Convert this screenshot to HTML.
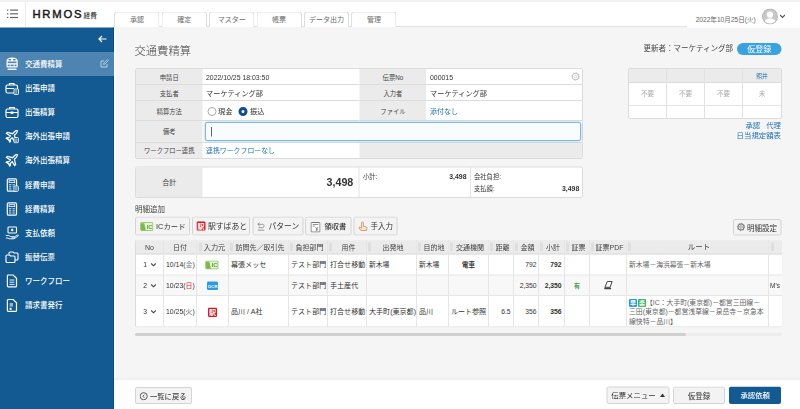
<!DOCTYPE html>
<html lang="ja">
<head>
<meta charset="utf-8">
<title>HRMOS 経費 - 交通費精算</title>
<style>
*{box-sizing:border-box;margin:0;padding:0}
html,body{width:800px;height:409px;overflow:hidden;background:#f5f5f5}
#root{position:absolute;left:0;top:0;width:1600px;height:818px;transform:scale(0.5);transform-origin:0 0}
body{position:relative;font-family:"Liberation Sans","Noto Sans CJK JP",sans-serif;font-size:15px;color:#333;line-height:1}
.a{position:absolute;white-space:nowrap}
/* header */
#hd{left:0;top:0;width:1600px;height:56px;background:#fff}
#hdl{left:228px;top:52px;width:1146px;height:4px;background:#f5f5f5;border-top:2px solid #e2e2e2}
#hdtop{left:0;top:0;width:1600px;height:4px;background:#f1f1f1}
.tab{top:23px;height:31px;width:90.8px;background:#fff;border:2px solid #dfdfdf;border-bottom:none;border-radius:6px 6px 0 0;text-align:center;font-size:14px;line-height:27.2px;color:#6a6a6a}
#logo{left:64.8px;top:17.4px;font-size:22.6px;font-weight:normal;-webkit-text-stroke:0.9px #1a1a1a;letter-spacing:3.5px;color:#1a1a1a;line-height:24px}
#logo2{left:167.2px;top:22.8px;font-size:13.2px;font-weight:500;color:#333;line-height:16px}
/* sidebar */
#sb{left:0;top:54.6px;width:228.4px;height:764px;background:#135a92;border-right:2.4px solid #0d4b87}
#sbw{left:228.4px;top:56px;width:3px;height:762px;background:#fdfdfd}
#act{left:0;top:104px;width:228px;height:48px;background:#4d84b2}
.mi{left:50px;color:#fff;font-size:15px;font-weight:500;line-height:20px}
.ic{left:10px;width:28px;height:28px}
/* form */
.tbl{background:#fff;border:2px solid #dcdcdc;border-radius:4px}
.lb{background:#ebebeb;text-align:center;font-size:12.6px;color:#444;border-bottom:2px solid #dcdcdc}
.ln{background:#dcdcdc}
.v{font-size:14px;color:#333;line-height:18px}
.lk{color:#2271b1}
.btn{background:#f3f3f3;border:2px solid #d4d4d4;border-radius:4px;font-size:16px;color:#333;line-height:32px}
.th{top:481.2px;height:28px;font-size:14px;line-height:28px;text-align:center;color:#444}
.grip{top:485px;width:6px;height:18px;background:#dedede;border-radius:2px}
.td{font-size:13.6px;line-height:18px;color:#333}
</style>
</head>
<body>
<div id="root">
<!-- header -->
<div id="hd" class="a"></div>
<div id="hdtop" class="a"></div>
<div id="hdl" class="a"></div>
<svg class="a" style="left:14px;top:18px" width="22" height="20" viewBox="0 0 11 10"><g fill="#666"><rect x="0" y="0.5" width="1.3" height="1.2"/><rect x="3" y="0.5" width="8" height="1.2"/><rect x="0" y="4.2" width="1.3" height="1.2"/><rect x="3" y="4.2" width="8" height="1.2"/><rect x="0" y="7.9" width="1.3" height="1.2"/><rect x="3" y="7.9" width="8" height="1.2"/></g></svg>
<div class="a" style="left:50px;top:4px;width:2px;height:50px;background:#ececec"></div>
<div id="logo" class="a">HRMOS</div>
<div id="logo2" class="a">経費</div>
<div class="a tab" style="left:228.4px">承認</div>
<div class="a tab" style="left:323.2px">確定</div>
<div class="a tab" style="left:418px">マスター</div>
<div class="a tab" style="left:512.8px">帳票</div>
<div class="a tab" style="left:607.6px">データ出力</div>
<div class="a tab" style="left:702.4px">管理</div>
<div class="a" style="left:1391.4px;top:31px;font-size:13.2px;color:#666;line-height:16px">2022年10月25日(火)</div>
<svg class="a" style="left:1524px;top:17.4px" width="32" height="32" viewBox="0 0 16 16"><defs><clipPath id="avc"><circle cx="8" cy="8" r="7"/></clipPath></defs><circle cx="8" cy="8" r="8" fill="#b9b9b9"/><circle cx="8" cy="8" r="6.9" fill="#c9c9c9"/><g clip-path="url(#avc)" fill="#fff"><circle cx="8" cy="6.2" r="3.1"/><path d="M1.500 16c0-4.500 2.800-6 6.500-6s6.500 1.500 6.500 6z"/></g></svg>
<svg class="a" style="left:1559px;top:28px" width="12" height="10" viewBox="0 0 6 5"><path d="M0.6 1l2.4 2.4L5.4 1" fill="none" stroke="#555" stroke-width="1.1"/></svg>

<!-- sidebar -->
<div id="sb" class="a"></div>
<div id="sbw" class="a"></div>
<div id="act" class="a"></div>
<svg class="a" style="left:196px;top:70px" width="18" height="16" viewBox="0 0 9 8"><path d="M8.5 4H1.2M4 1L1 4l3 3" fill="none" stroke="#fff" stroke-width="1.2"/></svg>
<svg class="a" style="left:200px;top:118px" width="18" height="18" viewBox="0 0 9 9"><path d="M7 5v3H1V2h3" fill="none" stroke="#b9d0e4" stroke-width="1"/><path d="M3.5 5.5l0.4-1.6L7.3 0.6l1.1 1.1L5 5z" fill="none" stroke="#b9d0e4" stroke-width="0.9"/></svg>

<!-- icons -->
<svg class="a" style="left:11.8px;top:114px" width="24.4" height="27.2" viewBox="0 0 12.200 13.600"><path d="M0.500 9.800V4.200C0.500 1.600 2.500 0.400 6.100 0.400s5.600 1.200 5.600 3.800V9.800c0 0.500-0.300 0.700-0.700 0.700H1.200c-0.400 0-0.700-0.200-0.700-0.700z" fill="#fff"/><g fill="#4d84b2"><rect x="2.400" y="1.900" width="2.800" height="1.500" rx="0.600"/><rect x="7" y="1.900" width="2.800" height="1.500" rx="0.600"/><rect x="1.700" y="4.500" width="8.800" height="1.700"/><rect x="1.700" y="7.600" width="2" height="1.600"/><rect x="4.500" y="7.600" width="3.200" height="1.600"/><rect x="8.500" y="7.600" width="2" height="1.600"/></g><path d="M2.300 11.400h7.600l1.200 1.700H1.100z" fill="#fff" opacity="0.900"/></svg>
<svg class="a ic" style="top:162.7px" viewBox="0 0 14 14"><rect x="1" y="3.5" width="11.5" height="8" rx="1.5" fill="none" stroke="#fff" stroke-width="1.2"/><path d="M4.5 3.5v-1.5h4.5v1.5" fill="none" stroke="#fff" stroke-width="1.2"/><path d="M1 7h8" stroke="#fff" stroke-width="1.1"/><rect x="9" y="7.5" width="4.5" height="5.5" rx="0.8" fill="#135a92" stroke="#fff" stroke-width="0.9"/><path d="M10.2 9.2h2.1M10.2 10.4h2.1M10.2 11.6h2.1" stroke="#fff" stroke-width="0.6"/></svg>
<svg class="a ic" style="top:210.9px" viewBox="0 0 14 14"><rect x="1" y="3.5" width="12" height="8.5" rx="1.5" fill="none" stroke="#fff" stroke-width="1.2"/><path d="M4.7 3.5v-1.5h4.6v1.5" fill="none" stroke="#fff" stroke-width="1.2"/><path d="M1 7h12" stroke="#fff" stroke-width="1.1"/><rect x="5.6" y="6" width="2.8" height="2.4" fill="#fff"/></svg>
<svg class="a ic" style="top:259.1px" viewBox="0 0 14 14"><path d="M12.5 1.5c-1-0.6-2.2 0-3 0.8L7.6 4.2 2.4 3 1.4 4l4 2.4-1.8 2-1.7-0.3-0.7 0.7 2.3 1.3 1.3 2.3 0.7-0.7-0.3-1.7 2-1.8L9.600 12l1-1-1.200-5.200 1.900-1.900c0.800-0.800 1.400-2 0.800-3z" fill="none" stroke="#fff" stroke-width="1.25"/><rect x="9" y="8" width="4.300" height="5.300" rx="0.800" fill="#135a92" stroke="#fff" stroke-width="0.900"/><path d="M10.100 9.700h2.100M10.100 10.800h2.100M10.100 11.900h2.100" stroke="#fff" stroke-width="0.600"/></svg>
<svg class="a ic" style="top:307.3px" viewBox="0 0 14 14"><path d="M12.5 1.500c-1-0.600-2.200 0-3 0.800L7.600 4.200 2.400 3 1.400 4l4 2.400-1.800 2-1.700-0.300-0.700 0.700 2.300 1.300 1.300 2.300 0.700-0.700-0.300-1.700 2-1.800L9.600 12l1-1-1.200-5.200 1.900-1.900c0.800-0.800 1.400-2 0.800-3z" fill="none" stroke="#fff" stroke-width="1.25"/></svg>
<svg class="a ic" style="top:355.5px" viewBox="0 0 14 14"><rect x="2.300" y="0.800" width="9.200" height="12.400" rx="1.300" fill="none" stroke="#fff" stroke-width="1.200"/><rect x="4.100" y="2.700" width="5.600" height="1.900" fill="none" stroke="#fff" stroke-width="0.800"/><path d="M4 6.800h2.300M7.500 6.800h2.300M4 8.900h2.300M7.500 8.900h1M4 11h2.300" stroke="#fff" stroke-width="0.900"/><rect x="9" y="8" width="4.300" height="5.300" rx="0.800" fill="#135a92" stroke="#fff" stroke-width="0.900"/><path d="M10.100 9.700h2.100M10.100 10.800h2.100M10.100 11.900h2.100" stroke="#fff" stroke-width="0.600"/></svg>
<svg class="a ic" style="top:403.7px" viewBox="0 0 14 14"><rect x="2.300" y="0.800" width="9.200" height="12.400" rx="1.300" fill="none" stroke="#fff" stroke-width="1.200"/><rect x="4.100" y="2.700" width="5.600" height="1.900" fill="none" stroke="#fff" stroke-width="0.800"/><path d="M4 6.800h2.300M7.500 6.800h2.300M4 8.900h2.300M7.500 8.900h2.300M4 11h2.300M7.500 11h2.300" stroke="#fff" stroke-width="0.900"/></svg>
<svg class="a ic" style="top:451.9px" viewBox="0 0 14 14"><rect x="3" y="1" width="8.500" height="6" rx="0.800" fill="none" stroke="#fff" stroke-width="1.100"/><circle cx="7.200" cy="4" r="1.200" fill="#fff"/><path d="M0.800 9.500l3 0 2 1.200h3.200c0.800 0 0.800 1.200 0 1.200H6.500M9.200 11l3.300-2c0.700-0.400 1.300 0.500 0.600 1l-4 2.800H4l-1-0.800H0.800" fill="none" stroke="#fff" stroke-width="0.900"/></svg>
<svg class="a ic" style="top:500.1px" viewBox="0 0 14 14"><path d="M4 4.500V3c0-0.600 0.400-1 1-1h3l1 1h3c0.600 0 1 0.400 1 1v5c0 0.600-0.400 1-1 1h-2" fill="none" stroke="#fff" stroke-width="1.100"/><path d="M1 6c0-0.600 0.400-1 1-1h2.500l1 1H9c0.600 0 1 0.400 1 1v4.500c0 0.600-0.400 1-1 1H2c-0.600 0-1-0.400-1-1z" fill="none" stroke="#fff" stroke-width="1.100"/></svg>
<svg class="a ic" style="top:548.3px" viewBox="0 0 14 14"><path d="M3.300 1h4.900l3.300 3.300V12c0 0.600-0.300 0.900-0.900 0.900H3.300c-0.600 0-0.900-0.300-0.900-0.900V1.900c0-0.600 0.300-0.900 0.900-0.900z" fill="none" stroke="#fff" stroke-width="1.200"/><path d="M4.500 6h4.900M4.500 8.200h4.900M4.500 10.400h4.900" stroke="#fff" stroke-width="0.900"/></svg>
<svg class="a ic" style="top:596.5px" viewBox="0 0 14 14"><path d="M3.300 1h4.900l3.300 3.300V12c0 0.600-0.300 0.900-0.900 0.900H3.300c-0.600 0-0.900-0.300-0.900-0.900V1.900c0-0.600 0.300-0.900 0.900-0.900z" fill="none" stroke="#fff" stroke-width="1.200"/><rect x="4.600" y="4.500" width="3.400" height="3.600" fill="#fff" opacity="0.550"/><rect x="4.600" y="9.300" width="2" height="2" fill="#fff"/></svg>

<div class="a mi" style="top:118.6px">交通費精算</div>
<div class="a mi" style="top:166.8px">出張申請</div>
<div class="a mi" style="top:215px">出張精算</div>
<div class="a mi" style="top:263.2px">海外出張申請</div>
<div class="a mi" style="top:311.4px">海外出張精算</div>
<div class="a mi" style="top:359.6px">経費申請</div>
<div class="a mi" style="top:407.8px">経費精算</div>
<div class="a mi" style="top:456px">支払依頼</div>
<div class="a mi" style="top:504.2px">振替伝票</div>
<div class="a mi" style="top:552.4px">ワークフロー</div>
<div class="a mi" style="top:600.6px">請求書発行</div>

<!-- title -->
<div class="a" style="left:269px;top:90px;font-size:22.6px;line-height:26px;color:#4a4a4a;font-weight:300;font-family:'Liberation Sans','Noto Sans CJK JP',sans-serif">交通費精算</div>
<div class="a" style="left:1200px;width:266px;text-align:right;top:86px;font-size:15px;line-height:22px;color:#444">更新者：マーケティング部</div>
<div class="a" style="left:1474px;top:86px;width:89px;height:24px;border-radius:12px;background:#3aa2e0;color:#fff;font-size:16px;line-height:23px;text-align:center">仮登録</div>

<!-- form table -->
<div class="a tbl" style="left:270px;top:136px;width:896px;height:182px"></div>
<div class="a lb" style="left:272px;top:138px;width:133px;height:32px;line-height:36px">申請日</div>
<div class="a lb" style="left:272px;top:170px;width:133px;height:32px;line-height:34.8px">支払者</div>
<div class="a lb" style="left:272px;top:202px;width:133px;height:40px;line-height:44px">精算方法</div>
<div class="a lb" style="left:272px;top:242px;width:133px;height:44px;line-height:42px">備考</div>
<div class="a lb" style="left:272px;top:286px;width:133px;height:30px;line-height:30px;border-bottom:none">ワークフロー連携</div>
<div class="a lb" style="left:719.4px;top:138px;width:133px;height:32px;line-height:36px">伝票No</div>
<div class="a lb" style="left:719.4px;top:170px;width:133px;height:32px;line-height:34.8px">入力者</div>
<div class="a lb" style="left:719.4px;top:202px;width:133px;height:40px;line-height:44px">ファイル</div>
<div class="a" style="left:719.4px;top:286px;width:444.6px;height:30px;background:#ebebeb"></div>
<div class="a ln" style="left:404px;top:168px;width:314px;height:2px"></div>
<div class="a ln" style="left:404px;top:200px;width:314px;height:2px"></div>
<div class="a ln" style="left:404px;top:240px;width:314px;height:2px"></div>
<div class="a ln" style="left:852px;top:168px;width:312px;height:2px"></div>
<div class="a ln" style="left:852px;top:200px;width:312px;height:2px"></div>
<div class="a ln" style="left:852px;top:240px;width:312px;height:2px"></div>
<div class="a ln" style="left:404px;top:284px;width:760px;height:2px"></div>
<div class="a v" style="left:412px;top:147px;font-size:13.8px">2022/10/25 18:03:50</div>
<div class="a v" style="left:412px;top:177px;font-size:14.4px">マーケティング部</div>
<div class="a" style="left:415px;top:213.6px;width:18px;height:18px;border:2px solid #aaa;border-radius:50%;background:#fff"></div>
<div class="a v" style="left:436px;top:213.4px;font-size:14.4px">現金</div>
<div class="a" style="left:477px;top:213.6px;width:18.4px;height:18.4px;border:6px solid #0e4f94;border-radius:50%;background:#fff"></div>
<div class="a v" style="left:500px;top:213.4px;font-size:14.4px">振込</div>
<div class="a" style="left:410px;top:244px;width:752px;height:38px;border:2px solid #7db7e6;border-radius:4px;background:#f8fcff;box-shadow:0 0 5px #7dbcf0"></div>
<div class="a" style="left:422px;top:254px;width:2px;height:19px;background:#666"></div>
<div class="a v lk" style="left:412px;top:292px;font-size:13.8px">連携ワークフローなし</div>
<div class="a v" style="left:860px;top:147px;font-size:13.8px">000015</div>
<div class="a v" style="left:860px;top:177px;font-size:14.4px">マーケティング部</div>
<div class="a v lk" style="left:860px;top:213.4px;font-size:14px">添付なし</div>
<svg class="a" style="left:1141.8px;top:144px" width="18" height="18" viewBox="0 0 9 9"><circle cx="4.500" cy="4.500" r="3.200" fill="none" stroke="#c4c4c4" stroke-width="1.100"/><circle cx="4.500" cy="4.500" r="3.900" fill="none" stroke="#c4c4c4" stroke-width="0.800" stroke-dasharray="1 2.060"/><circle cx="4.500" cy="4.500" r="1.300" fill="none" stroke="#c8c8c8" stroke-width="0.700"/></svg>

<!-- approval table -->
<div class="a tbl" style="left:1256px;top:136px;width:308px;height:102px"></div>
<div class="a" style="left:1258px;top:138px;width:304px;height:28px;background:#ebebeb;border-bottom:2px solid #dcdcdc"></div>
<div class="a ln" style="left:1332px;top:138px;width:2px;height:98px;background:#e2e2e2"></div>
<div class="a ln" style="left:1408px;top:138px;width:2px;height:98px;background:#e2e2e2"></div>
<div class="a ln" style="left:1484px;top:138px;width:2px;height:98px;background:#e2e2e2"></div>
<div class="a ln" style="left:1258px;top:210px;width:304px;height:2px;background:#e4e4e4"></div>
<div class="a" style="left:1486px;top:144px;width:76px;text-align:center;font-size:11.6px;line-height:16px;color:#2271b1">照井</div>
<div class="a" style="left:1258px;top:180px;width:74px;text-align:center;font-size:13.2px;line-height:16px;color:#aaa">不要</div>
<div class="a" style="left:1334px;top:180px;width:74px;text-align:center;font-size:13.2px;line-height:16px;color:#aaa">不要</div>
<div class="a" style="left:1410px;top:180px;width:74px;text-align:center;font-size:13.2px;line-height:16px;color:#aaa">不要</div>
<div class="a" style="left:1486px;top:180px;width:76px;text-align:center;font-size:13.2px;line-height:16px;color:#aaa">未</div>
<div class="a lk" style="left:1362px;width:200px;text-align:right;top:242px;font-size:14.8px;line-height:18px">承認<span style="display:inline-block;width:12px"></span>代理</div>
<div class="a lk" style="left:1362px;width:200px;text-align:right;top:262px;font-size:14.8px;line-height:18px">日当規定額表</div>

<!-- total table -->
<div class="a tbl" style="left:270px;top:333px;width:896px;height:63px"></div>
<div class="a lb" style="left:272px;top:335px;width:133px;height:59px;line-height:59px;border-bottom:none;font-size:14px">合計</div>
<div class="a" style="left:498.6px;width:208px;text-align:right;top:352.4px;font-size:21.4px;font-weight:bold;line-height:24px;color:#333">3,498</div>
<div class="a ln" style="left:717px;top:334px;width:2px;height:60px;background:#e4e4e4"></div>
<div class="a ln" style="left:940px;top:334px;width:2px;height:60px;background:#e4e4e4"></div>
<div class="a" style="left:726px;top:346px;font-size:12.6px;line-height:16px">小計:</div>
<div class="a" style="left:837px;width:96px;text-align:right;top:346px;font-size:13.8px;font-weight:bold;line-height:16px">3,498</div>
<div class="a" style="left:948px;top:346px;font-size:12.6px;line-height:16px">会社負担:</div>
<div class="a" style="left:948px;top:369.2px;font-size:12.6px;line-height:16px">支払額:</div>
<div class="a" style="left:1062.6px;width:96px;text-align:right;top:369.2px;font-size:13.8px;font-weight:bold;line-height:16px">3,498</div>

<!-- detail buttons -->
<div class="a" style="left:270px;top:409.4px;font-size:15px;line-height:18px;color:#444">明細追加</div>
<div class="a btn" style="left:270px;top:433px;width:110px;height:38px"></div>
<div class="a btn" style="left:384px;top:433px;width:116px;height:38px"></div>
<div class="a btn" style="left:505px;top:433px;width:102px;height:38px"></div>
<div class="a btn" style="left:610.4px;top:433px;width:92.8px;height:38px"></div>
<div class="a btn" style="left:707px;top:433px;width:88.4px;height:38px"></div>
<div class="a" style="left:312px;top:443px;font-size:14.8px;line-height:20px">ICカード</div>
<div class="a" style="left:416px;top:443px;font-size:15.6px;line-height:20px">駅すぱあと</div>
<div class="a" style="left:537px;top:443px;font-size:15.6px;line-height:20px">パターン</div>
<div class="a" style="left:649px;top:443px;line-height:20px;font-weight:500;font-size:14.6px">領収書</div>
<div class="a" style="left:741px;top:443px;font-size:15px;line-height:20px">手入力</div>
<!-- btn icons -->
<svg class="a" style="left:280px;top:443.6px" width="27" height="18" viewBox="0 0 13 9"><rect x="0.400" y="0.400" width="12.200" height="8.200" rx="1" fill="#e4f2d6" stroke="#7cb94a" stroke-width="0.800"/><path d="M0.800 8.200V1.200h3.200l1.600 7z" fill="#7cb94a"/><text x="9.200" y="6.600" font-family="Liberation Sans,sans-serif" font-size="5.600" font-weight="bold" fill="#5ea02c" text-anchor="middle">IC</text></svg>
<div class="a" style="left:393px;top:442.8px;width:18.4px;height:18.4px;background:#dd1320;border-radius:2.4px;color:#fff;font-size:14px;line-height:18px;text-align:center;font-weight:bold">駅</div>
<svg class="a" style="left:514px;top:444px" width="16" height="18" viewBox="0 0 8 9"><path d="M2.600 0.600L0.800 2.300l1.800 1.700M0.800 2.300H5.500c2 0 2 3.400 0 3.400H1.500" fill="none" stroke="#8c8c8c" stroke-width="0.900"/><path d="M0.800 8.200h6.500" stroke="#8c8c8c" stroke-width="0.900"/></svg>
<svg class="a" style="left:620.6px;top:443.2px" width="20" height="22" viewBox="0 0 10 11"><rect x="0.500" y="1" width="9" height="9.500" rx="0.800" fill="#fff" stroke="#666" stroke-width="0.900"/><path d="M2.200 3h5.600M2.200 4.600h2" stroke="#666" stroke-width="0.700"/><path d="M5 5.500l1.200 1.700L7.500 5.500M6.200 7.200V9.500M5.200 7.500h2M5.200 8.500h2" stroke="#666" stroke-width="0.600" fill="none"/></svg>
<svg class="a" style="left:716px;top:442.4px" width="20" height="20" viewBox="0 0 10 10"><path d="M4.200 1c0.700-0.300 1.200 0.100 1.200 0.800v3.400l2.800 0.700c0.600 0.200 0.900 0.600 0.800 1.200L8.500 9.500H2.800L1 7c-0.400-0.600 0.300-1.200 0.900-0.800L3.400 7.200V1.800c0-0.400 0.300-0.700 0.800-0.800z" fill="#f6e3c8" stroke="#b88a55" stroke-width="0.700"/></svg>

<div class="a btn" style="left:1466px;top:438px;width:97px;height:33px"></div>
<svg class="a" style="left:1473.2px;top:445px" width="18" height="18" viewBox="0 0 9 9"><circle cx="4.500" cy="4.500" r="3.100" fill="none" stroke="#666" stroke-width="1"/><circle cx="4.500" cy="4.500" r="3.800" fill="none" stroke="#666" stroke-width="0.800" stroke-dasharray="1 1.980"/><circle cx="4.500" cy="4.500" r="1.300" fill="none" stroke="#777" stroke-width="0.700"/></svg>
<div class="a" style="left:1494px;top:446px;font-size:15px;line-height:20px">明細設定</div>

<!-- detail table -->
<div class="a" style="left:270px;top:479px;width:1294px;height:176.4px;background:#fff;border:2px solid #dcdcdc;border-right:none;border-radius:4px 0 0 4px"></div>
<div class="a" style="left:272px;top:481px;width:1292px;height:28.4px;background:#ebebeb;border-bottom:2px solid #dcdcdc"></div>
<div class="a" style="left:272px;top:550px;width:1292px;height:42px;background:#f8f8f8"></div>
<div class="a ln" style="left:272px;top:549px;width:1292px;height:2px;background:#e6e6e6"></div>
<div class="a ln" style="left:272px;top:590px;width:1292px;height:2px;background:#e6e6e6"></div>
<!-- col lines -->
<div class="a ln" style="left:326px;top:480px;width:2px;height:174px;background:#e6e6e6"></div>
<div class="a ln" style="left:392px;top:480px;width:2px;height:174px;background:#e6e6e6"></div>
<div class="a ln" style="left:456px;top:480px;width:2px;height:174px;background:#e6e6e6"></div>
<div class="a ln" style="left:576px;top:480px;width:2px;height:174px;background:#e6e6e6"></div>
<div class="a ln" style="left:654px;top:480px;width:2px;height:174px;background:#e6e6e6"></div>
<div class="a ln" style="left:732px;top:480px;width:2px;height:174px;background:#e6e6e6"></div>
<div class="a ln" style="left:832px;top:480px;width:2px;height:174px;background:#e6e6e6"></div>
<div class="a ln" style="left:896px;top:480px;width:2px;height:174px;background:#e6e6e6"></div>
<div class="a ln" style="left:976px;top:480px;width:2px;height:174px;background:#e6e6e6"></div>
<div class="a ln" style="left:1026px;top:480px;width:2px;height:174px;background:#e6e6e6"></div>
<div class="a ln" style="left:1076px;top:480px;width:2px;height:174px;background:#e6e6e6"></div>
<div class="a ln" style="left:1128px;top:480px;width:2px;height:174px;background:#e6e6e6"></div>
<div class="a ln" style="left:1178px;top:480px;width:2px;height:174px;background:#e6e6e6"></div>
<div class="a ln" style="left:1252px;top:480px;width:2px;height:174px;background:#e6e6e6"></div>
<div class="a ln" style="left:1536px;top:480px;width:2px;height:174px;background:#e6e6e6"></div>
<!-- header labels -->
<div class="a th" style="left:272px;width:54px">No</div>
<div class="a th" style="left:328px;width:64px;font-size:14px">日付</div>
<div class="a th" style="left:396px;width:60px;padding-left:6px;font-size:14.4px">入力元</div>
<div class="a th" style="left:458px;width:118px;padding-left:6px">訪問先／取引先</div>
<div class="a th" style="left:578px;width:76px;padding-left:6px">負担部門</div>
<div class="a th" style="left:656px;width:76px;padding-left:6px">用件</div>
<div class="a th" style="left:734px;width:98px;padding-left:6px">出発地</div>
<div class="a th" style="left:834px;width:62px;padding-left:6px">目的地</div>
<div class="a th" style="left:898px;width:78px;padding-left:6px">交通機関</div>
<div class="a th" style="left:978px;width:48px;padding-left:6px">距離</div>
<div class="a th" style="left:1028px;width:48px;padding-left:6px">金額</div>
<div class="a th" style="left:1078px;width:50px;padding-left:6px">小計</div>
<div class="a th" style="left:1130px;width:48px;padding-left:6px">証票</div>
<div class="a th" style="left:1180px;width:72px;padding-left:6px">証票PDF</div>
<div class="a th" style="left:1254px;width:282px;padding-left:6px;font-size:15px">ルート</div>
<!-- grips -->
<div class="a grip" style="left:398px"></div>
<div class="a grip" style="left:460px"></div>
<div class="a grip" style="left:580px"></div>
<div class="a grip" style="left:658px"></div>
<div class="a grip" style="left:736px"></div>
<div class="a grip" style="left:836px"></div>
<div class="a grip" style="left:900px"></div>
<div class="a grip" style="left:980px"></div>
<div class="a grip" style="left:1030px"></div>
<div class="a grip" style="left:1080px"></div>
<div class="a grip" style="left:1132px"></div>
<div class="a grip" style="left:1182px"></div>
<div class="a grip" style="left:1256px"></div>
<div class="a grip" style="left:1542px"></div>

<!-- rows -->
<div class="a td" style="left:286.6px;top:520px">1</div>
<div class="a td" style="left:286.6px;top:562px">2</div>
<div class="a td" style="left:286.6px;top:613.8px">3</div>
<svg class="a" style="left:300.6px;top:524.6px" width="12" height="10" viewBox="0 0 6 5"><path d="M0.700 1l2.300 2.300L5.300 1" fill="none" stroke="#444" stroke-width="1.100"/></svg>
<svg class="a" style="left:300.6px;top:566.6px" width="12" height="10" viewBox="0 0 6 5"><path d="M0.700 1l2.300 2.300L5.300 1" fill="none" stroke="#444" stroke-width="1.100"/></svg>
<svg class="a" style="left:300.6px;top:619.2px" width="12" height="10" viewBox="0 0 6 5"><path d="M0.700 1l2.300 2.300L5.300 1" fill="none" stroke="#444" stroke-width="1.100"/></svg>
<div class="a td" style="left:332px;top:520px;font-size:13.8px">10/14(<span style="color:#888">金</span>)</div>
<div class="a td" style="left:332px;top:562px;font-size:13.8px">10/23(<span style="color:#e0202a">日</span>)</div>
<div class="a td" style="left:332px;top:613.8px;font-size:13.8px">10/25(<span style="color:#666">火</span>)</div>
<svg class="a" style="left:410.4px;top:521.4px" width="27.4" height="18" viewBox="0 0 13 9"><rect x="0.400" y="0.400" width="12.200" height="8.200" rx="1" fill="#e4f2d6" stroke="#7cb94a" stroke-width="0.800"/><path d="M0.800 8.200V1.200h3.200l1.600 7z" fill="#7cb94a"/><text x="9.200" y="6.600" font-family="Liberation Sans,sans-serif" font-size="5.600" font-weight="bold" fill="#5ea02c" text-anchor="middle">IC</text></svg>
<div class="a" style="left:414.4px;top:562.6px;width:22px;height:17.6px;background:#2e9be0;border-radius:2.4px;color:#fff;font-size:8.8px;line-height:19.6px;text-align:center;font-weight:bold">OCR</div>
<div class="a" style="left:415.6px;top:614.6px;width:18.8px;height:19.2px;background:#dd1320;border-radius:2.4px;color:#fff;font-size:14px;line-height:18.8px;text-align:center;font-weight:bold">駅</div>
<div class="a td" style="left:462px;top:520px;font-size:14.1px">幕張メッセ</div>
<div class="a td" style="left:462px;top:613.8px;font-size:14px">品川 / A社</div>
<div class="a td" style="left:582px;top:520px;font-size:14.1px">テスト部門</div>
<div class="a td" style="left:582px;top:562px;font-size:14.1px">テスト部門</div>
<div class="a td" style="left:582px;top:613.8px;font-size:14.1px">テスト部門</div>
<div class="a td" style="left:660px;top:520px;font-size:14.1px">打合せ移動</div>
<div class="a td" style="left:660px;top:562px;font-size:14.1px">手土産代</div>
<div class="a td" style="left:660px;top:613.8px;font-size:14.1px">打合せ移動</div>
<div class="a td" style="left:738px;top:520px">新木場</div>
<div class="a td" style="left:738px;top:613.8px;font-size:14.1px">大手町(東京都)</div>
<div class="a td" style="left:838px;top:520px">新木場</div>
<div class="a td" style="left:838px;top:613.8px;font-size:14.1px">品川</div>
<div class="a td" style="left:898px;top:520px;width:78px;text-align:center;font-weight:bold;font-size:13px">電車</div>
<div class="a td" style="left:898px;top:613.8px;width:78px;text-align:center;font-size:14.1px">ルート参照</div>
<div class="a td" style="left:977.2px;top:613.8px;width:44px;text-align:right;font-size:13.5px">6.5</div>
<div class="a td" style="left:1027.2px;top:520px;width:46px;text-align:right;font-size:13.5px">792</div>
<div class="a td" style="left:1027.2px;top:562px;width:46px;text-align:right;font-size:13.5px">2,350</div>
<div class="a td" style="left:1027.2px;top:613.8px;width:46px;text-align:right;font-size:13.5px">356</div>
<div class="a td" style="left:1077.2px;top:520px;width:46px;text-align:right;font-size:13.5px;font-weight:bold">792</div>
<div class="a td" style="left:1077.2px;top:562px;width:46px;text-align:right;font-size:13.5px;font-weight:bold">2,350</div>
<div class="a td" style="left:1077.2px;top:613.8px;width:46px;text-align:right;font-size:13.5px;font-weight:bold">356</div>
<div class="a td" style="left:1130px;top:562px;width:48px;text-align:center;font-size:12px;font-weight:bold;color:#3a9c3a">有</div>
<svg class="a" style="left:1206.6px;top:561.2px" width="20" height="20" viewBox="0 0 10 10"><path d="M3.800 1h4.800l-2 5.800H1.400z" fill="#fff" stroke="#444" stroke-width="1"/><path d="M0.800 8h6.800" stroke="#444" stroke-width="1.500"/></svg>
<div class="a td" style="left:1258px;top:520px;color:#666">新木場－海浜幕張－新木場</div>
<div class="a td" style="left:1540px;top:562px;width:24px;overflow:hidden;font-size:13px">M's</div>
<div class="a" style="left:1258px;top:598px;width:16px;height:16px;background:#2e9be0;border-radius:2px;color:#fff;font-size:12px;line-height:16px;text-align:center;font-weight:bold">早</div>
<div class="a" style="left:1276px;top:598px;width:16px;height:16px;background:#2eb85c;border-radius:2px;color:#fff;font-size:12px;line-height:16px;text-align:center;font-weight:bold">楽</div>
<div class="a td" style="left:1292px;top:595px;color:#666;font-size:13.7px;line-height:19.2px">【IC：大手町(東京都)－都営三田線－</div>
<div class="a td" style="left:1258px;top:614.2px;color:#666;font-size:13.7px;line-height:19.2px">三田(東京都)－都営浅草線－泉岳寺－京急本</div>
<div class="a td" style="left:1258px;top:633.4px;color:#666;font-size:13.7px;line-height:19.2px">線快特－品川】</div>

<!-- scrollbar -->
<div class="a" style="left:270px;top:666px;width:1294px;height:6px;background:#ededed;border-radius:4px"></div>
<div class="a" style="left:270px;top:666px;width:1102px;height:6px;background:#cfcfcf;border-radius:4px"></div>

<!-- footer -->
<div class="a" style="left:228px;top:757.2px;width:1372px;height:62px;background:#fff;border-top:2px solid #e4e4e4"></div>
<div class="a btn" style="left:270px;top:774.4px;width:113.6px;height:33.2px"></div>
<svg class="a" style="left:279.2px;top:783.8px" width="16.8" height="16.8" viewBox="0 0 8 8"><circle cx="4" cy="4" r="3.400" fill="none" stroke="#444" stroke-width="0.800"/><path d="M4.700 2.400L3.100 4l1.600 1.600" fill="none" stroke="#444" stroke-width="0.800"/></svg>
<div class="a" style="left:300px;top:782.8px;font-size:14.6px;line-height:20px;font-weight:500;color:#444">一覧に戻る</div>
<div class="a btn" style="left:1212.6px;top:773.4px;width:126px;height:34.6px"></div>
<div class="a" style="left:1222.6px;top:781.4px;font-size:14.8px;line-height:20px">伝票メニュー</div>
<div class="a" style="left:1319.6px;top:787.2px;width:0;height:0;border-left:5px solid transparent;border-right:5px solid transparent;border-bottom:7px solid #333"></div>
<div class="a btn" style="left:1346.4px;top:773.4px;width:103.6px;height:34.6px;text-align:center;line-height:33.2px;font-size:15px">仮登録</div>
<div class="a" style="left:1458.4px;top:773.4px;width:104px;height:34.6px;background:#135a92;border-radius:4px;color:#fff;text-align:center;line-height:36.4px;font-size:14.8px;font-weight:500">承認依頼</div>
</div>
</body>
</html>
